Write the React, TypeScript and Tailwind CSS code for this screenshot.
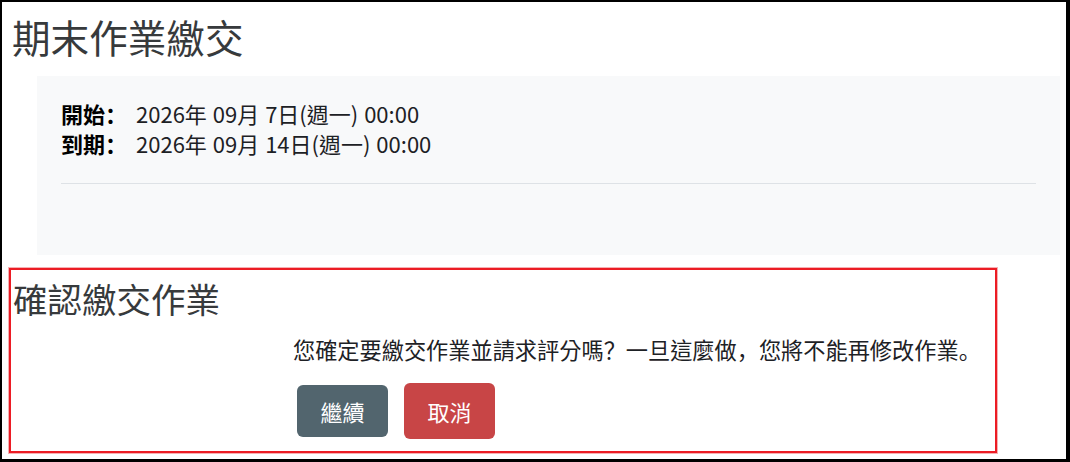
import React from "react";

const P = ({ children }: { children: React.ReactNode }) => (
  <span style={{ fontFamily: '"Noto Sans CJK SC", sans-serif' }}>{children}</span>
);

export default function App() {
  return (
    <div
      className="w-[1070px] h-[462px] box-border bg-white border-black border-t-2 border-l-2 border-r-4 border-b-[3px] flex flex-col overflow-hidden"
      style={{ fontFamily: '"Noto Sans CJK TC", "Noto Sans", sans-serif' }}
    >
      <h2 className="ml-[10px] mt-[11px] text-[38.6px] leading-[47px] text-[#373a3c] font-normal">
        期末作業繳交
      </h2>

      <div className="ml-[35px] mr-[6px] mt-[16px] h-[179px] bg-[#f8f9fa] px-[24px] pt-[22px]">
        <div className="grid grid-cols-[auto_1fr] gap-x-[9px] text-[22px] leading-[30px] text-[#1d2125]">
          <div className="font-bold text-black">開始<P>：</P></div>
          <div className="[word-spacing:1px]">2026年 09月 7日(週一) 00:00</div>
          <div className="font-bold text-black">到期<P>：</P></div>
          <div className="[word-spacing:1px]">2026年 09月 14日(週一) 00:00</div>
        </div>
        <div className="mt-[25px] border-t border-[#dee2e6]" />
      </div>

      <div className="ml-[7px] mt-[13px] w-[988px] h-[185px] box-border border-2 border-[#ec1c24] shadow-[0_0_0_1px_#f6b0b3] flex flex-col">
        <h3 className="ml-[2px] mt-[8px] text-[34.5px] leading-[41px] text-[#373a3c] font-normal">
          確認繳交作業
        </h3>
        <div className="pl-[282px] mt-[15px] flex flex-col">
          <p className="text-[22.2px] leading-[30px] text-[#1d2125]">
            您確定要繳交作業並請求評分嗎<P>？</P>一旦這麼做<P>，</P>您將不能再修改作業<P>。</P>
          </p>
          <div className="mt-[19px] flex items-center gap-[16px] ml-[4px]">
            <button className="w-[91px] h-[52px] rounded-[6px] bg-[#52656e] text-white text-[22px] leading-none">
              繼續
            </button>
            <button className="w-[91px] h-[56px] rounded-[6px] bg-[#c84546] text-white text-[22px] leading-none">
              取消
            </button>
          </div>
        </div>
      </div>
    </div>
  );
}
